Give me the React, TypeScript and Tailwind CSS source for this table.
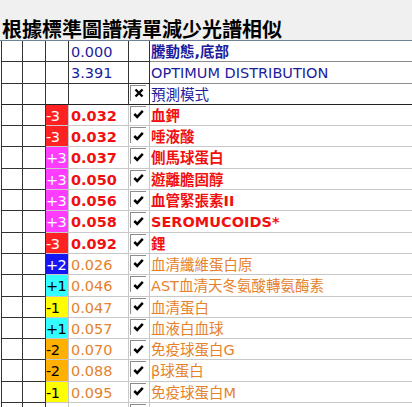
import React from 'react';

type Row = {
  badge?: string;
  value?: string;
  mark?: 'check' | 'cross' | 'none';
  name?: string;
  tone: 'navy' | 'navyBold' | 'red' | 'orange' | 'empty';
  head?: boolean;
};

const BADGE: Record<string, string> = {
  '-3': 'bg-[#ff2222] text-white',
  '+3': 'bg-[#ff3cff] text-white',
  '+2': 'bg-[#1616f4] text-white',
  '+1': 'bg-[#33ffff] text-black',
  '-1': 'bg-[#ffff00] text-black',
  '-2': 'bg-[#ffb000] text-black',
};

const ROWS: Row[] = [
  { value: '0.000', mark: 'none', name: '騰動態,底部', tone: 'navyBold', head: true },
  { value: '3.391', mark: 'none', name: 'OPTIMUM DISTRIBUTION', tone: 'navy', head: true },
  { mark: 'cross', name: '預測模式', tone: 'navy', head: true },
  { badge: '-3', value: '0.032', mark: 'check', name: '血鉀', tone: 'red' },
  { badge: '-3', value: '0.032', mark: 'check', name: '唾液酸', tone: 'red' },
  { badge: '+3', value: '0.037', mark: 'check', name: '側馬球蛋白', tone: 'red' },
  { badge: '+3', value: '0.050', mark: 'check', name: '遊離膽固醇', tone: 'red' },
  { badge: '+3', value: '0.056', mark: 'check', name: '血管緊張素II', tone: 'red' },
  { badge: '+3', value: '0.058', mark: 'check', name: 'SEROMUCOIDS*', tone: 'red' },
  { badge: '-3', value: '0.092', mark: 'check', name: '鋰', tone: 'red' },
  { badge: '+2', value: '0.026', mark: 'check', name: '血清纖維蛋白原', tone: 'orange' },
  { badge: '+1', value: '0.046', mark: 'check', name: 'AST血清天冬氨酸轉氨酶素', tone: 'orange' },
  { badge: '-1', value: '0.047', mark: 'check', name: '血清蛋白', tone: 'orange' },
  { badge: '+1', value: '0.057', mark: 'check', name: '血液白血球', tone: 'orange' },
  { badge: '-2', value: '0.070', mark: 'check', name: '免疫球蛋白G', tone: 'orange' },
  { badge: '-2', value: '0.088', mark: 'check', name: 'β球蛋白', tone: 'orange' },
  { badge: '-1', value: '0.095', mark: 'check', name: '免疫球蛋白M', tone: 'orange' },
  { mark: 'check', tone: 'empty' },
];

const COLOR: Record<Row['tone'], string> = {
  navy: 'text-[#1c1c9c]',
  navyBold: 'text-[#1c1c9c]',
  red: 'text-[#f01010]',
  orange: 'text-[#e5822c]',
  empty: '',
};

const Box = ({ mark }: { mark: 'check' | 'cross' }) => (
  <div className="mt-px ml-px w-[16px] h-[16px] bg-white border-t border-l border-[#8c8c8c] flex items-center justify-center">
    {mark === 'check' ? (
      <svg width="11" height="10" viewBox="0 0 11 10">
        <path d="M1.3 5 L4.2 7.9 L9.8 1.8" fill="none" stroke="#000" strokeWidth="2.5" />
      </svg>
    ) : (
      <svg width="10" height="10" viewBox="0 0 10 10">
        <path d="M1.5 1.5 L8.5 8.5 M8.5 1.5 L1.5 8.5" fill="none" stroke="#000" strokeWidth="2.4" />
      </svg>
    )}
  </div>
);

const TableRow = ({ row, last }: { row: Row; last: boolean }) => {
  const soft = row.head ? 'border-[#8c8c8c]' : 'border-[#c8c8c8]';
  const hard = row.head ? 'border-[#333]' : soft;
  const bottom = last ? 'border-b-[#222]' : '';
  const valueBold = row.tone === 'red' ? 'font-bold' : '';
  const nameBold = row.tone === 'red' || row.tone === 'navyBold' ? 'font-bold' : '';
  return (
    <div className={`flex h-[21.3px] ml-px ${COLOR[row.tone]}`}>
      <div className={`w-[22px] shrink-0 border-l border-r border-b border-[#333] ${bottom}`} />
      <div className={`w-[23px] shrink-0 border-r border-b border-[#333] ${bottom}`} />
      <div
        className={`w-[23px] shrink-0 overflow-hidden border-r border-b ${hard} ${bottom} pt-[2px] leading-[18px] tracking-[-0.6px] ${row.badge ? BADGE[row.badge] : ''}`}
      >
        {row.badge}
      </div>
      <div className={`w-[60px] shrink-0 border-r border-b ${hard} ${bottom} pl-[2px] pt-[2px] leading-[18px] ${valueBold}`}>
        {row.value}
      </div>
      <div className={`w-[21px] shrink-0 border-r border-b ${hard} ${bottom}`}>
        {row.mark && row.mark !== 'none' && <Box mark={row.mark} />}
      </div>
      <div className={`flex-1 border-b ${soft} ${bottom} pl-[1px] pt-[2px] leading-[18px] whitespace-nowrap ${nameBold}`}>
        {row.name}
      </div>
    </div>
  );
};

export default function App() {
  return (
    <div
      className="w-[412px] h-[407px] overflow-hidden bg-[#f0f0f0] text-[14.5px]"
      style={{ fontFamily: '"DejaVu Sans", "Noto Sans CJK TC", sans-serif' }}
    >
      <div className="h-[40px] flex items-end pl-[2px]">
        <h1
          className="text-[20px] leading-[22px] font-bold text-black"
          style={{ fontFamily: '"Noto Sans CJK TC", sans-serif' }}
        >
          根據標準圖譜清單減少光譜相似
        </h1>
      </div>
      <div className="border-t border-[#6f8294] bg-white">
        {ROWS.map((row, i) => (
          <TableRow key={i} row={row} last={i === 2} />
        ))}
      </div>
    </div>
  );
}
